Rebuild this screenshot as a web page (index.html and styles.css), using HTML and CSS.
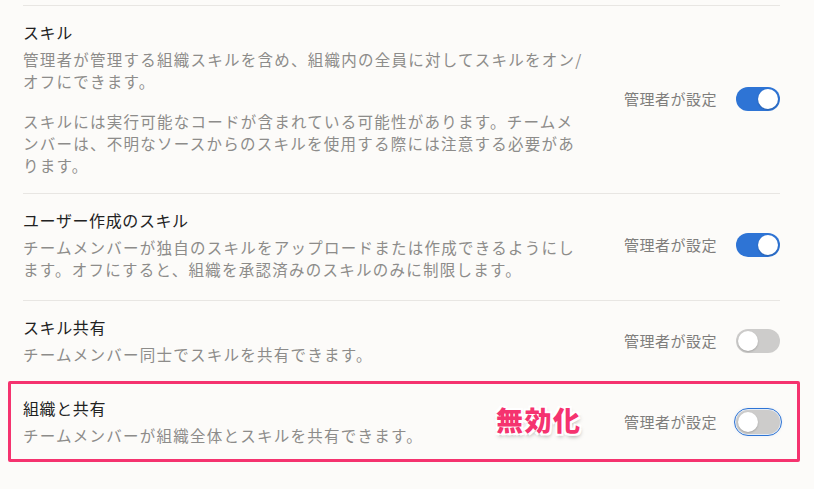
FILE: index.html
```html
<!DOCTYPE html>
<html lang="ja">
<head>
    <meta charset="UTF-8">
    <meta name="viewport" content="width=device-width, initial-scale=1.0">
    <title>スキル設定</title>
    <link rel="stylesheet" href="styles.css">
</head>
<body>
<main class="settings">
    <div class="setting-row first">
        <div class="setting-text">
            <h3 class="setting-title">スキル</h3>
            <p class="setting-desc">管理者が管理する組織スキルを含め、組織内の全員に対してスキルをオン/オフにできます。</p>
            <p class="setting-desc note">スキルには実行可能なコードが含まれている可能性があります。チームメンバーは、不明なソースからのスキルを使用する際には注意する必要があります。</p>
        </div>
        <div class="setting-control">
            <span class="managed">管理者が設定</span>
            <span class="toggle on"><span class="knob"></span></span>
        </div>
    </div>

    <div class="setting-row tall">
        <div class="setting-text">
            <h3 class="setting-title">ユーザー作成のスキル</h3>
            <p class="setting-desc">チームメンバーが独自のスキルをアップロードまたは作成できるようにします。オフにすると、組織を承認済みのスキルのみに制限します。</p>
        </div>
        <div class="setting-control">
            <span class="managed">管理者が設定</span>
            <span class="toggle on"><span class="knob"></span></span>
        </div>
    </div>

    <div class="setting-row">
        <div class="setting-text">
            <h3 class="setting-title">スキル共有</h3>
            <p class="setting-desc">チームメンバー同士でスキルを共有できます。</p>
        </div>
        <div class="setting-control">
            <span class="managed">管理者が設定</span>
            <span class="toggle"><span class="knob"></span></span>
        </div>
    </div>

    <!-- highlighted row with annotation -->
    <div class="setting-row highlight">
        <div class="setting-text">
            <h3 class="setting-title">組織と共有</h3>
            <p class="setting-desc">チームメンバーが組織全体とスキルを共有できます。</p>
        </div>
        <span class="callout">無効化</span>
        <div class="setting-control">
            <span class="managed">管理者が設定</span>
            <span class="toggle focused"><span class="knob"></span></span>
        </div>
    </div>
</main>
</body>
</html>
```

FILE: styles.css
```css
/* General Styles */
body {
    margin: 0;
    background-color: #fcfbf9;
    font-family: "Noto Sans CJK JP", "Noto Sans", sans-serif;
    color: #222;
}

.settings {
    margin: 5px 34px 0 23px;
}

/* Rows */
.setting-row {
    display: flex;
    align-items: center;
    justify-content: space-between;
    border-top: 1px solid #e8e6e3;
    padding: 15px 0 16px;
    position: relative;
}

.setting-row.first {
    padding-bottom: 17px;
}

.setting-row.tall {
    padding-bottom: 20px;
}

.setting-text {
    width: 562px;
}

.setting-title {
    margin: 0;
    font-size: 16px;
    font-weight: normal;
    line-height: 22px;
    letter-spacing: 0.6px;
    color: #222;
}

.setting-desc {
    margin: 5px 0 0;
    font-size: 15.5px;
    line-height: 22px;
    letter-spacing: 1.25px;
    color: #8d8c8a;
}

.setting-desc.note {
    margin-top: 18px;
}

/* Right side controls */
.setting-control {
    display: flex;
    align-items: center;
    gap: 19px;
}

.managed {
    font-size: 15px;
    letter-spacing: 0.5px;
    color: #7f7e7c;
}

.toggle {
    width: 44px;
    height: 24px;
    border-radius: 12px;
    background-color: #cdcccb;
    display: flex;
    align-items: center;
    padding: 0 2px;
    box-sizing: border-box;
}

.toggle .knob {
    width: 20px;
    height: 20px;
    border-radius: 50%;
    background-color: #fff;
    box-shadow: 0 1px 2px rgba(0, 0, 0, 0.2);
}

.toggle.on {
    background-color: #2e74d5;
    justify-content: flex-end;
}

.toggle.focused {
    outline: 1.5px solid #2e74d5;
    outline-offset: 1px;
    box-shadow: 0 0 4px rgba(46, 116, 213, 0.3);
}

/* Pink annotation box */
.highlight {
    border: 3px solid #f5336f;
    border-radius: 2px;
    margin: 0 -20px 0 -15px;
    padding: 13px 17px 13px 12px;
}

.callout {
    position: absolute;
    left: 485px;
    top: 16px;
    font-size: 27px;
    font-weight: 900;
    color: #f5336f;
    letter-spacing: 1.5px;
    text-shadow: -2px -2px 0 #fff, 2px -2px 0 #fff, -2px 2px 0 #fff, 2px 2px 0 #fff,
        0 0 2px #fff, 1px 3px 4px rgba(0, 0, 0, 0.35);
}
```
